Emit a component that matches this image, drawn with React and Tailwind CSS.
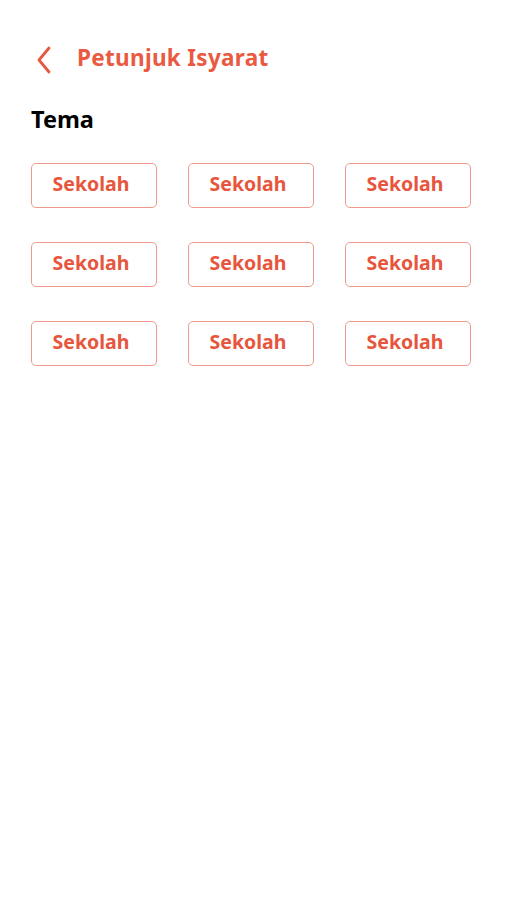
const topics = Array(9).fill("Sekolah");

const BackIcon = () => (
  <svg width="16" height="28" viewBox="0 0 16 28" fill="none" className="text-[#e8573f]">
    <polyline points="13,2 3,14 13,26" stroke="currentColor" strokeWidth="2.8" strokeLinecap="round" strokeLinejoin="round" />
  </svg>
);

const App = () => {
  return (
    <div className="min-h-[900px] w-full bg-white font-['Noto_Sans',sans-serif]">
      <header className="flex h-[30px] items-center pl-[36px] mt-[45px]">
        <BackIcon />
        <h1 className="mb-[4px] ml-[25px] text-[22.5px] font-bold leading-[30px] tracking-[0.3px] text-[#ea5a42]">
          Petunjuk Isyarat
        </h1>
      </header>

      <main className="px-[31px] pt-[29px]">
        <h2 className="text-[23.5px] font-bold leading-[30px] text-black">Tema</h2>
        <div className="mt-[29px] grid w-[439px] grid-cols-[126px_126px_126px] gap-x-[31px] gap-y-[34px]">
          {topics.map((t, i) => (
            <button
              key={i}
              className="flex h-[45px] items-center justify-center rounded-[5px] border-[1.5px] border-[#f29a8b] pb-[4px] pr-[6px] text-[19.5px] font-bold text-[#e8553d]"
            >
              {t}
            </button>
          ))}
        </div>
      </main>
    </div>
  );
};

export default App;
